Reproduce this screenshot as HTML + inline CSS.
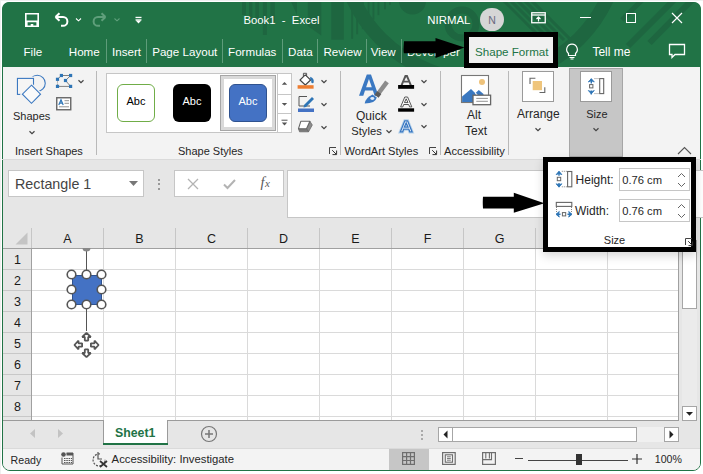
<!DOCTYPE html>
<html><head><meta charset="utf-8"><style>
html,body{margin:0;padding:0;width:703px;height:474px;overflow:hidden;background:#fff;font-family:"Liberation Sans", sans-serif;}
svg{overflow:visible}
</style></head><body>
<div style="position:absolute;left:0px;top:0px;width:703px;height:474px;background:#fff;"></div>
<div style="position:absolute;left:0px;top:0px;width:703px;height:1px;background:#efefef;"></div>
<div style="position:absolute;left:0px;top:0px;width:1px;height:474px;background:#efefef;"></div>
<div style="position:absolute;left:2px;top:2px;width:699px;height:469px;background:#f3f3f3;border-radius:8px;border:1px solid #217346;box-sizing:border-box;"></div>
<div style="position:absolute;left:2px;top:2px;width:699px;height:65px;background:#217346;border-radius:7px 7px 0 0;overflow:hidden;"></div>
<svg style="position:absolute;left:2px;top:2px;overflow:hidden;border-radius:7px 7px 0 0" width="699" height="65" viewBox="2 2 699 65"><rect x="242" y="0" width="4" height="15" fill="#1e6640"/><rect x="249" y="0" width="3.4000000000000057" height="19" fill="#1e6640"/><rect x="255.4" y="0" width="3.5999999999999943" height="24" fill="#1e6640"/><rect x="262.9" y="0" width="4.0" height="35" fill="#1e6640"/><rect x="270.4" y="0" width="4.400000000000034" height="22" fill="#1e6640"/><rect x="331.3" y="0" width="12.5" height="39.7" fill="#1e6640"/><path d="M290.3 0 H297 V15 Z" fill="#1e6640"/><path d="M307.8 0 H321.3 V35.4 L307.8 26 Z" fill="#1e6640"/><rect x="351.2" y="0" width="1.9" height="38.8" fill="#1e6640"/><rect x="356.2" y="0" width="1.9" height="34.3" fill="#1e6640"/><rect x="361.9" y="0" width="1.9" height="29.2" fill="#1e6640"/><rect x="367.6" y="0" width="1.9" height="24.1" fill="#1e6640"/><rect x="372.5" y="0" width="1.9" height="19.6" fill="#1e6640"/><rect x="377.5" y="0" width="1.9" height="15.1" fill="#1e6640"/><rect x="384" y="0" width="1.9" height="9.3" fill="#1e6640"/><rect x="389" y="0" width="1.9" height="4.8" fill="#1e6640"/><circle cx="412.5" cy="1" r="13.5" fill="#1e6640"/><circle cx="462" cy="24" r="14" fill="none" stroke="#1e6640" stroke-width="7"/><circle cx="480" cy="-60" r="140" fill="none" stroke="#1e6640" stroke-width="14"/><line x1="503" y1="0" x2="543" y2="40" stroke="#1e6640" stroke-width="3"/><line x1="510" y1="0" x2="550" y2="40" stroke="#1e6640" stroke-width="3"/><line x1="517" y1="0" x2="557" y2="40" stroke="#1e6640" stroke-width="3"/><line x1="524" y1="0" x2="564" y2="40" stroke="#1e6640" stroke-width="3"/><line x1="531" y1="0" x2="571" y2="40" stroke="#1e6640" stroke-width="3"/><line x1="628" y1="46" x2="674" y2="0" stroke="#1e6640" stroke-width="6"/><line x1="649.5" y1="43" x2="693" y2="-1" stroke="#1e6640" stroke-width="6"/><line x1="622" y1="20" x2="650" y2="-8" stroke="#1e6640" stroke-width="5"/></svg>
<svg style="position:absolute;left:25px;top:13px;" width="14" height="14" viewBox="0 0 14 14"><path fill="#fff" fill-rule="evenodd" d="M0 0 H14 V14 H0 Z M1.6 1.6 H12.4 V7.5 H1.6 Z M2.6 9.3 H11.4 V12.4 H8.3 V10.9 H5.7 V12.4 H2.6 Z"/></svg>
<svg style="position:absolute;left:53px;top:12px;" width="30" height="16" viewBox="0 0 30 16"><path d="M2.5 5 L6.5 1.2 M2.5 5 L6.5 8.8 M2.5 5 H10 A4.4 4.4 0 0 1 10 13.8 H8" fill="none" stroke="#fff" stroke-width="2"/><path d="M23 6.5 l2.5 2.3 l2.5 -2.3" fill="none" stroke="#fff" stroke-width="1.1"/></svg>
<svg style="position:absolute;left:92px;top:12px;" width="30" height="16" viewBox="0 0 30 16"><path d="M13.5 5 L9.5 1.2 M13.5 5 L9.5 8.8 M13.5 5 H6 A4.4 4.4 0 0 0 6 13.8 H8" fill="none" stroke="#5f9f7b" stroke-width="2"/><path d="M22.5 6.5 l2.5 2.3 l2.5 -2.3" fill="none" stroke="#5f9f7b" stroke-width="1.1"/></svg>
<svg style="position:absolute;left:135px;top:16px;" width="8" height="8" viewBox="0 0 8 8"><rect x="0.5" y="0.8" width="6" height="1.3" fill="#fff"/><rect x="0.5" y="3.3" width="6" height="1" fill="#fff"/><path d="M0.5 4.3 h6 l-3 3.2z" fill="#fff"/></svg>
<div style="position:absolute;left:243.5px;top:15.13px;font-size:11.3px;line-height:11.3px;color:#fff;font-weight:normal;white-space:nowrap;">Book1 &nbsp;- &nbsp;Excel</div>
<div style="position:absolute;left:427.3px;top:14.85px;font-size:11.4px;line-height:11.4px;color:#fff;font-weight:normal;white-space:nowrap;">NIRMAL</div>
<div style="position:absolute;left:480.2px;top:7.7px;width:23.8px;height:23.8px;background:#d6d6d6;border-radius:50%;"></div>
<div style="position:absolute;left:492.1px;top:15.11px;font-size:10.5px;line-height:10.5px;color:#6a6a80;font-weight:normal;white-space:nowrap;transform:translateX(-50%);">N</div>
<svg style="position:absolute;left:531px;top:12px;" width="15" height="12" viewBox="0 0 15 12"><rect x="0.75" y="0.75" width="13.5" height="10" fill="none" stroke="#fff" stroke-width="1.3"/><line x1="0.75" y1="3" x2="14" y2="3" stroke="#fff" stroke-width="1.3"/><path d="M7.5 9.5 V5 M5.5 7 L7.5 5 L9.5 7" fill="none" stroke="#fff" stroke-width="1.2"/></svg>
<div style="position:absolute;left:580px;top:17px;width:11px;height:1.2px;background:#fff;"></div>
<div style="position:absolute;left:626px;top:13px;width:10px;height:10px;border:1.2px solid #fff;box-sizing:border-box;"></div>
<svg style="position:absolute;left:671px;top:12px;" width="12" height="12" viewBox="0 0 12 12"><path d="M1 1 L11 11 M11 1 L1 11" stroke="#fff" stroke-width="1.2"/></svg>
<div style="position:absolute;left:23.5px;top:46.18px;font-size:11.6px;line-height:11.6px;color:#fff;font-weight:normal;white-space:nowrap;">File</div>
<div style="position:absolute;left:68.8px;top:46.18px;font-size:11.6px;line-height:11.6px;color:#fff;font-weight:normal;white-space:nowrap;">Home</div>
<div style="position:absolute;left:112px;top:46.18px;font-size:11.6px;line-height:11.6px;color:#fff;font-weight:normal;white-space:nowrap;">Insert</div>
<div style="position:absolute;left:152.2px;top:46.18px;font-size:11.6px;line-height:11.6px;color:#fff;font-weight:normal;white-space:nowrap;">Page Layout</div>
<div style="position:absolute;left:228.1px;top:46.18px;font-size:11.6px;line-height:11.6px;color:#fff;font-weight:normal;white-space:nowrap;">Formulas</div>
<div style="position:absolute;left:288.1px;top:46.18px;font-size:11.6px;line-height:11.6px;color:#fff;font-weight:normal;white-space:nowrap;">Data</div>
<div style="position:absolute;left:323.5px;top:46.18px;font-size:11.6px;line-height:11.6px;color:#fff;font-weight:normal;white-space:nowrap;">Review</div>
<div style="position:absolute;left:370.8px;top:46.18px;font-size:11.6px;line-height:11.6px;color:#fff;font-weight:normal;white-space:nowrap;">View</div>
<div style="position:absolute;left:407px;top:46.18px;font-size:11.6px;line-height:11.6px;color:#fff;font-weight:normal;white-space:nowrap;">Developer</div>
<div style="position:absolute;left:106px;top:39px;width:1px;height:24px;background:#5e9c7a;"></div>
<div style="position:absolute;left:146px;top:39px;width:1px;height:24px;background:#5e9c7a;"></div>
<div style="position:absolute;left:222px;top:39px;width:1px;height:24px;background:#5e9c7a;"></div>
<div style="position:absolute;left:282px;top:39px;width:1px;height:24px;background:#5e9c7a;"></div>
<div style="position:absolute;left:317px;top:39px;width:1px;height:24px;background:#5e9c7a;"></div>
<div style="position:absolute;left:366px;top:39px;width:1px;height:24px;background:#5e9c7a;"></div>
<div style="position:absolute;left:401px;top:39px;width:1px;height:24px;background:#5e9c7a;"></div>
<div style="position:absolute;left:469px;top:37px;width:85px;height:30px;background:#f0f0f0;"></div>
<div style="position:absolute;left:475px;top:46.18px;font-size:11.6px;line-height:11.6px;color:#217346;font-weight:normal;white-space:nowrap;">Shape Format</div>
<svg style="position:absolute;left:565px;top:43px;" width="14" height="17" viewBox="0 0 14 17"><path d="M7 1.2 A5.3 5.3 0 0 0 3.5 10.5 V12.5 H10.5 V10.5 A5.3 5.3 0 0 0 7 1.2 Z" fill="none" stroke="#fff" stroke-width="1.2"/><path d="M4.5 14.5 H9.5 M5.5 16 H8.5" stroke="#fff" stroke-width="1"/></svg>
<div style="position:absolute;left:592.4px;top:45.84px;font-size:12px;line-height:12px;color:#fff;font-weight:normal;white-space:nowrap;">Tell me</div>
<svg style="position:absolute;left:668px;top:43px;" width="18" height="16" viewBox="0 0 18 16"><path d="M1.5 1.5 H16.5 V11.5 H7 L4 14.5 V11.5 H1.5 Z" fill="none" stroke="#fff" stroke-width="1.3"/></svg>
<div style="position:absolute;left:2px;top:159px;width:699px;height:1px;background:#dadada;"></div>
<div style="position:absolute;left:96px;top:71px;width:1px;height:84px;background:#b9b9b9;"></div>
<div style="position:absolute;left:340px;top:71px;width:1px;height:84px;background:#b9b9b9;"></div>
<div style="position:absolute;left:440px;top:71px;width:1px;height:84px;background:#b9b9b9;"></div>
<div style="position:absolute;left:508px;top:71px;width:1px;height:84px;background:#b9b9b9;"></div>
<svg style="position:absolute;left:12px;top:70px;" width="40" height="40" viewBox="0 0 40 40"><circle cx="25.25" cy="13.2" r="8" fill="none" stroke="#3b78c0" stroke-width="1.1"/><rect x="5.45" y="8.4" width="16.05" height="16" fill="#f3f3f3" stroke="#f3f3f3" stroke-width="3.5"/><rect x="5.45" y="8.4" width="16.05" height="16" fill="#f5f5f5" stroke="#3b78c0" stroke-width="1.1"/><path d="M19.5 15.2 L28.5 24.2 L19.5 33.3 L10.4 24.2 Z" fill="#f3f3f3" stroke="#f3f3f3" stroke-width="3.5"/><path d="M19.5 15.2 L28.5 24.2 L19.5 33.3 L10.4 24.2 Z" fill="#fafafa" stroke="#3b78c0" stroke-width="1.1"/></svg>
<div style="position:absolute;left:13px;top:110.69px;font-size:11px;line-height:11px;color:#262626;font-weight:normal;white-space:nowrap;">Shapes</div>
<svg style="position:absolute;left:28px;top:129.5px;" width="8" height="5" viewBox="0 0 8 5"><path d="M1.5 1.2 L4 3.6 L6.5 1.2" fill="none" stroke="#444" stroke-width="1.2"/></svg>
<svg style="position:absolute;left:54px;top:72px;" width="20" height="18" viewBox="0 0 20 18"><path d="M7.4 3.5 H16.6 M7.4 3.5 L3.5 7.3 M16.6 3.5 L11.5 8.5 L16.6 14.4 H3.5" fill="none" stroke="#808080" stroke-width="1"/><path d="M3.5 7.3 V14.4" stroke="#808080" stroke-width="1" stroke-dasharray="1 1.2"/><rect x="5.800000000000001" y="1.9" width="3.2" height="3.2" fill="#2e75b6"/><rect x="15.000000000000002" y="1.9" width="3.2" height="3.2" fill="#2e75b6"/><rect x="1.9" y="5.699999999999999" width="3.2" height="3.2" fill="#2e75b6"/><rect x="9.9" y="6.9" width="3.2" height="3.2" fill="#2e75b6"/><rect x="1.9" y="12.8" width="3.2" height="3.2" fill="#2e75b6"/><rect x="15.000000000000002" y="12.8" width="3.2" height="3.2" fill="#2e75b6"/></svg>
<svg style="position:absolute;left:77px;top:79px;" width="8" height="5" viewBox="0 0 8 5"><path d="M1.5 1.2 L4 3.6 L6.5 1.2" fill="none" stroke="#444" stroke-width="1.2"/></svg>
<svg style="position:absolute;left:55.5px;top:96.5px;" width="16" height="14" viewBox="0 0 16 14"><rect x="0.75" y="0.75" width="14" height="12" fill="#fff" stroke="#666" stroke-width="1.4"/><path d="M2.8 8 L5 2.8 L7.2 8 M3.6 6.2 H6.4" fill="none" stroke="#2e75b6" stroke-width="1.2"/><path d="M8.5 3.7H13M8.5 6.3H13M3 9.8H13" stroke="#888" stroke-width="0.9"/></svg>
<div style="position:absolute;left:15px;top:145.69px;font-size:11px;line-height:11px;color:#262626;font-weight:normal;white-space:nowrap;">Insert Shapes</div>
<div style="position:absolute;left:106px;top:73px;width:185px;height:60px;background:#fff;border:1px solid #c6c6c6;box-sizing:border-box;"></div>
<div style="position:absolute;left:117px;top:84px;width:38px;height:38px;background:#fff;border:1.3px solid #70ad47;border-radius:6px;box-sizing:border-box;"></div>
<div style="position:absolute;left:136px;top:95.69px;font-size:11px;line-height:11px;color:#000;font-weight:normal;white-space:nowrap;transform:translateX(-50%);">Abc</div>
<div style="position:absolute;left:173px;top:84px;width:38px;height:38px;background:#000;border-radius:6px;"></div>
<div style="position:absolute;left:192px;top:95.69px;font-size:11px;line-height:11px;color:#fff;font-weight:normal;white-space:nowrap;transform:translateX(-50%);">Abc</div>
<div style="position:absolute;left:220px;top:74.5px;width:56px;height:56.5px;background:#fff;border:1px solid #a6a6a6;outline:3px solid #d9d9d9;outline-offset:-4px;box-sizing:border-box;"></div>
<div style="position:absolute;left:229px;top:84px;width:38px;height:38px;background:#4472c4;border:1.2px solid #2f528f;border-radius:6px;box-sizing:border-box;"></div>
<div style="position:absolute;left:248px;top:95.69px;font-size:11px;line-height:11px;color:#fff;font-weight:normal;white-space:nowrap;transform:translateX(-50%);">Abc</div>
<div style="position:absolute;left:277px;top:73px;width:14.5px;height:60px;background:#fff;border:1px solid #c6c6c6;box-sizing:border-box;"></div>
<div style="position:absolute;left:277px;top:94px;width:14.5px;height:1px;background:#c6c6c6;"></div>
<div style="position:absolute;left:277px;top:113px;width:14.5px;height:1px;background:#c6c6c6;"></div>
<svg style="position:absolute;left:281px;top:81px;" width="7" height="5" viewBox="0 0 7 5"><path d="M0.8 3.8 L3.5 1 L6.2 3.8 Z" fill="#555"/></svg>
<svg style="position:absolute;left:281px;top:102px;" width="7" height="5" viewBox="0 0 7 5"><path d="M0.8 1 L3.5 3.8 L6.2 1 Z" fill="#555"/></svg>
<svg style="position:absolute;left:281px;top:119px;" width="7" height="8" viewBox="0 0 7 8"><rect x="0.5" y="0.7" width="6" height="1" fill="#555"/><path d="M0.8 3.5 L3.5 6.5 L6.2 3.5 Z" fill="#555"/></svg>
<svg style="position:absolute;left:297px;top:72px;" width="18" height="18" viewBox="0 0 18 18"><path d="M6.4 5 V1.3 H9.6 V6" fill="none" stroke="#555" stroke-width="1"/><path d="M3 8 L8.3 2.8 L13.6 8 L8.3 13 Z" fill="#fff" stroke="#444" stroke-width="1.1" stroke-linejoin="round"/><path d="M13.2 4.8 Q17.6 6.5 16.6 10.8 Q15.2 11.8 14.2 10.2 Q14.8 8 13.2 7.2 Z" fill="#2e75b6"/><rect x="0.6" y="13.2" width="16" height="3.5" fill="#ed7d31"/></svg>
<svg style="position:absolute;left:297px;top:95px;" width="18" height="18" viewBox="0 0 18 18"><path d="M2 1.5 H10 M2 1.5 V11 H13" fill="none" stroke="#555" stroke-width="1"/><path d="M7 10 L15 2 L17 4 L9 12 L6.5 12.5 Z" fill="#2e75b6"/><rect x="1" y="13.5" width="16" height="3.5" fill="#4472c4"/></svg>
<svg style="position:absolute;left:296px;top:119px;" width="18" height="15" viewBox="0 0 18 15"><path d="M13.9 2.3 L16.3 6 L12.5 12.8 L10.5 9.7 Z" fill="#8c8c8c" stroke="#6a6a6a" stroke-width="0.8" stroke-linejoin="round"/><path d="M2.5 9.7 L10.5 9.7 L12.5 12.8 L3.5 12.8 Z" fill="#7a7a7a" stroke="#6a6a6a" stroke-width="0.8" stroke-linejoin="round"/><path d="M4.8 2.3 L13.9 2.3 L10.5 9.7 L2.5 9.7 Z" fill="#fff" stroke="#666" stroke-width="1.1" stroke-linejoin="round"/></svg>
<svg style="position:absolute;left:320px;top:79px;" width="8" height="5" viewBox="0 0 8 5"><path d="M1.5 1.2 L4 3.6 L6.5 1.2" fill="none" stroke="#444" stroke-width="1.2"/></svg>
<svg style="position:absolute;left:320px;top:101.5px;" width="8" height="5" viewBox="0 0 8 5"><path d="M1.5 1.2 L4 3.6 L6.5 1.2" fill="none" stroke="#444" stroke-width="1.2"/></svg>
<svg style="position:absolute;left:320px;top:124.5px;" width="8" height="5" viewBox="0 0 8 5"><path d="M1.5 1.2 L4 3.6 L6.5 1.2" fill="none" stroke="#444" stroke-width="1.2"/></svg>
<div style="position:absolute;left:178px;top:145.69px;font-size:11px;line-height:11px;color:#262626;font-weight:normal;white-space:nowrap;">Shape Styles</div>
<svg style="position:absolute;left:329px;top:147px;" width="9" height="9" viewBox="0 0 9 9"><path d="M0.5 7 V0.5 H7" fill="none" stroke="#444" stroke-width="1"/><path d="M3.2 3.2 L7 7 M7.6 3.5 V7.6 H3.5" fill="none" stroke="#333" stroke-width="1"/></svg>
<svg style="position:absolute;left:357px;top:72px;" width="32" height="34" viewBox="0 0 32 34"><path fill-rule="evenodd" fill="#3a78c2" d="M2 23.7 L9.8 2.5 H14 L21.5 23.7 H17.6 L15.9 18.6 H8 L6.3 23.7 Z M9.1 15.3 H14.8 L11.95 7 Z"/><path d="M21 22 L30 9.8" stroke="#8c8c8c" stroke-width="4.5"/><path d="M19.6 24.3 L22.3 20.6" stroke="#5a5a5a" stroke-width="5"/><path d="M7.7 31.4 Q9 25.5 15.5 22.6 L19.8 25.4 Q18.5 31.2 7.7 31.4 Z" fill="#3a78c2"/><ellipse cx="15.3" cy="26.5" rx="2" ry="1.4" fill="#fff" opacity="0.85"/></svg>
<div style="position:absolute;left:356px;top:109.84px;font-size:12px;line-height:12px;color:#262626;font-weight:normal;white-space:nowrap;">Quick</div>
<div style="position:absolute;left:351.3px;top:126.32px;font-size:11.2px;line-height:11.2px;color:#262626;font-weight:normal;white-space:nowrap;">Styles</div>
<svg style="position:absolute;left:384.5px;top:128.8px;" width="8" height="5" viewBox="0 0 8 5"><path d="M1.5 1.2 L4 3.6 L6.5 1.2" fill="none" stroke="#444" stroke-width="1.2"/></svg>
<svg style="position:absolute;left:397px;top:74px;" width="18" height="16" viewBox="0 0 18 16"><path fill-rule="evenodd" fill="#555" d="M3.6 11 L7.8 1 H10.6 L14.8 11 H12.6 L11.7 8.6 H6.7 L5.8 11 Z M7.4 6.7 H11 L9.2 2.9 Z"/><rect x="1.1" y="11" width="16" height="3.8" fill="#000"/></svg>
<svg style="position:absolute;left:397px;top:95px;" width="18" height="17" viewBox="0 0 18 17"><path fill-rule="evenodd" fill="#fff" stroke="#444" stroke-width="0.9" d="M3.6 11.9 L7.8 2 H10.6 L14.8 11.9 H12.6 L11.7 9.5 H6.7 L5.8 11.9 Z M7.4 7.6 H11 L9.2 3.8 Z"/><rect x="1.1" y="13.3" width="16" height="3.4" fill="#000"/></svg>
<svg style="position:absolute;left:397px;top:118px;" width="18" height="16" viewBox="0 0 18 16"><path fill-rule="evenodd" fill="none" stroke="#9dc3e6" stroke-width="3" opacity="0.7" d="M3.3 13.9 L7.8 2.8 H10.6 L15.1 13.9 H12.8 L11.8 11.2 H6.6 L5.6 13.9 Z M7.3 9.2 H11.1 L9.2 4.8 Z"/><path fill-rule="evenodd" fill="#fff" stroke="#3a78c2" stroke-width="1.3" d="M3.3 13.9 L7.8 2.8 H10.6 L15.1 13.9 H12.8 L11.8 11.2 H6.6 L5.6 13.9 Z M7.3 9.2 H11.1 L9.2 4.8 Z"/></svg>
<svg style="position:absolute;left:420px;top:78.7px;" width="8" height="5" viewBox="0 0 8 5"><path d="M1.5 1.2 L4 3.6 L6.5 1.2" fill="none" stroke="#444" stroke-width="1.2"/></svg>
<svg style="position:absolute;left:420px;top:101.7px;" width="8" height="5" viewBox="0 0 8 5"><path d="M1.5 1.2 L4 3.6 L6.5 1.2" fill="none" stroke="#444" stroke-width="1.2"/></svg>
<svg style="position:absolute;left:420px;top:124.4px;" width="8" height="5" viewBox="0 0 8 5"><path d="M1.5 1.2 L4 3.6 L6.5 1.2" fill="none" stroke="#444" stroke-width="1.2"/></svg>
<div style="position:absolute;left:344.5px;top:145.90px;font-size:11.1px;line-height:11.1px;color:#262626;font-weight:normal;white-space:nowrap;">WordArt Styles</div>
<svg style="position:absolute;left:429px;top:147px;" width="9" height="9" viewBox="0 0 9 9"><path d="M0.5 7 V0.5 H7" fill="none" stroke="#444" stroke-width="1"/><path d="M3.2 3.2 L7 7 M7.6 3.5 V7.6 H3.5" fill="none" stroke="#333" stroke-width="1"/></svg>
<svg style="position:absolute;left:460px;top:74px;" width="32" height="32" viewBox="0 0 32 32"><rect x="1.5" y="1.5" width="27" height="27" fill="#fff" stroke="#777" stroke-width="1.1"/><circle cx="22" cy="7.9" r="3" fill="#eec27a"/><path d="M2.1 22.5 L11 15 L15.3 19.2 L18.8 16.1 L23.5 20 V28 H2.1 Z" fill="#3a78c0"/><path d="M15.3 19.2 L17.2 21" stroke="#fff" stroke-width="1.2"/><rect x="13" y="21.2" width="17.6" height="9.5" fill="#fff" stroke="#666" stroke-width="1.3"/><path d="M16.3 24.4 H27.9 M16.3 27.3 H27.9" stroke="#888" stroke-width="0.9"/></svg>
<div style="position:absolute;left:467px;top:109.34px;font-size:12px;line-height:12px;color:#262626;font-weight:normal;white-space:nowrap;">Alt</div>
<div style="position:absolute;left:465px;top:125.34px;font-size:12px;line-height:12px;color:#262626;font-weight:normal;white-space:nowrap;">Text</div>
<div style="position:absolute;left:444px;top:145.52px;font-size:11.2px;line-height:11.2px;color:#262626;font-weight:normal;white-space:nowrap;">Accessibility</div>
<div style="position:absolute;left:522px;top:71px;width:32px;height:31px;background:#fff;border:1px solid #9a9a9a;box-sizing:border-box;"></div>
<svg style="position:absolute;left:529px;top:77px;" width="18" height="18" viewBox="0 0 18 18"><rect x="3.7" y="4" width="9.3" height="9.2" fill="#efc57c"/><path d="M1 7 V1.3 H6.4 M10.5 15.5 H15.8 V10.3" fill="none" stroke="#666" stroke-width="1.1"/></svg>
<div style="position:absolute;left:517px;top:108.14px;font-size:12px;line-height:12px;color:#262626;font-weight:normal;white-space:nowrap;">Arrange</div>
<svg style="position:absolute;left:534px;top:127px;" width="8" height="5" viewBox="0 0 8 5"><path d="M1.5 1.2 L4 3.6 L6.5 1.2" fill="none" stroke="#444" stroke-width="1.2"/></svg>
<div style="position:absolute;left:569px;top:68px;width:54px;height:88.5px;background:#c6c6c6;border:1px solid #a6a6a6;box-sizing:border-box;"></div>
<div style="position:absolute;left:580px;top:71px;width:32px;height:31px;background:#fff;border:1px solid #9a9a9a;box-sizing:border-box;"></div>
<svg style="position:absolute;left:587px;top:76px;" width="18" height="20" viewBox="0 0 18 20"><rect x="12.7" y="2.6" width="4" height="15" fill="#fff" stroke="#666" stroke-width="1.1"/><path d="M7.5 2.6 H12 M7.5 17.6 H12" stroke="#777" stroke-width="0.9" stroke-dasharray="1 1"/><path d="M4.3 3 V7.5 M4.3 14.5 V18.5" stroke="#2e75b6" stroke-width="1.4"/><path d="M1.3 6 L4.3 2.6 L7.3 6 L4.3 4.8 Z M1.3 14.5 L4.3 17.9 L7.3 14.5 L4.3 15.7 Z" fill="#2e75b6" stroke="#2e75b6" stroke-width="0.8" stroke-linejoin="round"/><rect x="2.6" y="8.6" width="3.3" height="3.3" fill="#fff" stroke="#666" stroke-width="1"/></svg>
<div style="position:absolute;left:586.3px;top:108.77px;font-size:10.9px;line-height:10.9px;color:#262626;font-weight:normal;white-space:nowrap;">Size</div>
<svg style="position:absolute;left:592px;top:127px;" width="8" height="5" viewBox="0 0 8 5"><path d="M1.5 1.2 L4 3.6 L6.5 1.2" fill="none" stroke="#444" stroke-width="1.2"/></svg>
<svg style="position:absolute;left:677px;top:146px;" width="15" height="9" viewBox="0 0 15 9"><path d="M1 8 L7.5 1.5 L14 8" fill="none" stroke="#555" stroke-width="1.1"/></svg>
<div style="position:absolute;left:3px;top:160px;width:697px;height:88px;background:#e6e6e6;"></div>
<div style="position:absolute;left:8px;top:170px;width:135.5px;height:26.5px;background:#fff;border:1px solid #c6c6c6;box-sizing:border-box;"></div>
<div style="position:absolute;left:15px;top:176.90px;font-size:14.3px;line-height:14.3px;color:#444;font-weight:normal;white-space:nowrap;">Rectangle 1</div>
<svg style="position:absolute;left:129px;top:181px;" width="9" height="5" viewBox="0 0 9 5"><path d="M0 0 H9 L4.5 5 Z" fill="#777"/></svg>
<div style="position:absolute;left:158px;top:178.5px;width:2px;height:2px;background:#999;"></div>
<div style="position:absolute;left:158px;top:183px;width:2px;height:2px;background:#999;"></div>
<div style="position:absolute;left:158px;top:187.5px;width:2px;height:2px;background:#999;"></div>
<div style="position:absolute;left:174px;top:170px;width:110px;height:26.5px;background:#fff;border:1px solid #c6c6c6;box-sizing:border-box;"></div>
<svg style="position:absolute;left:187px;top:178px;" width="12" height="12" viewBox="0 0 12 12"><path d="M1 1 L11 11 M11 1 L1 11" stroke="#b3b3b3" stroke-width="1.3"/></svg>
<svg style="position:absolute;left:223px;top:178px;" width="13" height="12" viewBox="0 0 13 12"><path d="M1 6.5 L4.5 10 L12 2" fill="none" stroke="#b3b3b3" stroke-width="2"/></svg>
<div style="position:absolute;left:260.5px;top:175.23px;font-size:14.5px;line-height:14.5px;color:#5a5a5a;font-weight:normal;white-space:nowrap;font-family:'Liberation Serif';"><i>f</i><i style='font-size:11px;margin-left:0.5px'>x</i></div>
<div style="position:absolute;left:286.8px;top:170px;width:430px;height:47.5px;background:#fff;border:1px solid #c6c6c6;box-sizing:border-box;"></div>
<div style="position:absolute;left:3px;top:228px;width:676px;height:20px;background:#e6e6e6;"></div>
<div style="position:absolute;left:3px;top:248px;width:676px;height:172px;background:#fff;"></div>
<svg style="position:absolute;left:15px;top:232px;" width="13" height="13" viewBox="0 0 13 13"><path d="M12.5 0.5 V12.5 H0.5 Z" fill="#c4c4c4"/></svg>
<div style="position:absolute;left:103px;top:228px;width:1px;height:20px;background:#c6c6c6;"></div>
<div style="position:absolute;left:67.5px;top:232.92px;font-size:12.5px;line-height:12.5px;color:#1a1a1a;font-weight:normal;white-space:nowrap;transform:translateX(-50%);">A</div>
<div style="position:absolute;left:175px;top:228px;width:1px;height:20px;background:#c6c6c6;"></div>
<div style="position:absolute;left:139.5px;top:232.92px;font-size:12.5px;line-height:12.5px;color:#1a1a1a;font-weight:normal;white-space:nowrap;transform:translateX(-50%);">B</div>
<div style="position:absolute;left:247px;top:228px;width:1px;height:20px;background:#c6c6c6;"></div>
<div style="position:absolute;left:211.5px;top:232.92px;font-size:12.5px;line-height:12.5px;color:#1a1a1a;font-weight:normal;white-space:nowrap;transform:translateX(-50%);">C</div>
<div style="position:absolute;left:319px;top:228px;width:1px;height:20px;background:#c6c6c6;"></div>
<div style="position:absolute;left:283.5px;top:232.92px;font-size:12.5px;line-height:12.5px;color:#1a1a1a;font-weight:normal;white-space:nowrap;transform:translateX(-50%);">D</div>
<div style="position:absolute;left:391px;top:228px;width:1px;height:20px;background:#c6c6c6;"></div>
<div style="position:absolute;left:355.5px;top:232.92px;font-size:12.5px;line-height:12.5px;color:#1a1a1a;font-weight:normal;white-space:nowrap;transform:translateX(-50%);">E</div>
<div style="position:absolute;left:463px;top:228px;width:1px;height:20px;background:#c6c6c6;"></div>
<div style="position:absolute;left:427.5px;top:232.92px;font-size:12.5px;line-height:12.5px;color:#1a1a1a;font-weight:normal;white-space:nowrap;transform:translateX(-50%);">F</div>
<div style="position:absolute;left:535px;top:228px;width:1px;height:20px;background:#c6c6c6;"></div>
<div style="position:absolute;left:499.5px;top:232.92px;font-size:12.5px;line-height:12.5px;color:#1a1a1a;font-weight:normal;white-space:nowrap;transform:translateX(-50%);">G</div>
<div style="position:absolute;left:607px;top:228px;width:1px;height:20px;background:#c6c6c6;"></div>
<div style="position:absolute;left:571.5px;top:232.92px;font-size:12.5px;line-height:12.5px;color:#1a1a1a;font-weight:normal;white-space:nowrap;transform:translateX(-50%);">H</div>
<div style="position:absolute;left:31px;top:228px;width:1px;height:20px;background:#c6c6c6;"></div>
<div style="position:absolute;left:3px;top:248px;width:676px;height:1px;background:#a0a0a0;"></div>
<div style="position:absolute;left:3px;top:249px;width:28px;height:171px;background:#e6e6e6;"></div>
<div style="position:absolute;left:31px;top:249px;width:1px;height:171px;background:#a0a0a0;"></div>
<div style="position:absolute;left:3px;top:269px;width:28px;height:1px;background:#c8c8c8;"></div>
<div style="position:absolute;left:32px;top:269px;width:647px;height:1px;background:#dadada;"></div>
<div style="position:absolute;left:17.5px;top:253.92px;font-size:12.5px;line-height:12.5px;color:#1a1a1a;font-weight:normal;white-space:nowrap;transform:translateX(-50%);">1</div>
<div style="position:absolute;left:3px;top:290px;width:28px;height:1px;background:#c8c8c8;"></div>
<div style="position:absolute;left:32px;top:290px;width:647px;height:1px;background:#dadada;"></div>
<div style="position:absolute;left:17.5px;top:274.92px;font-size:12.5px;line-height:12.5px;color:#1a1a1a;font-weight:normal;white-space:nowrap;transform:translateX(-50%);">2</div>
<div style="position:absolute;left:3px;top:311px;width:28px;height:1px;background:#c8c8c8;"></div>
<div style="position:absolute;left:32px;top:311px;width:647px;height:1px;background:#dadada;"></div>
<div style="position:absolute;left:17.5px;top:295.92px;font-size:12.5px;line-height:12.5px;color:#1a1a1a;font-weight:normal;white-space:nowrap;transform:translateX(-50%);">3</div>
<div style="position:absolute;left:3px;top:332px;width:28px;height:1px;background:#c8c8c8;"></div>
<div style="position:absolute;left:32px;top:332px;width:647px;height:1px;background:#dadada;"></div>
<div style="position:absolute;left:17.5px;top:316.92px;font-size:12.5px;line-height:12.5px;color:#1a1a1a;font-weight:normal;white-space:nowrap;transform:translateX(-50%);">4</div>
<div style="position:absolute;left:3px;top:353px;width:28px;height:1px;background:#c8c8c8;"></div>
<div style="position:absolute;left:32px;top:353px;width:647px;height:1px;background:#dadada;"></div>
<div style="position:absolute;left:17.5px;top:337.92px;font-size:12.5px;line-height:12.5px;color:#1a1a1a;font-weight:normal;white-space:nowrap;transform:translateX(-50%);">5</div>
<div style="position:absolute;left:3px;top:374px;width:28px;height:1px;background:#c8c8c8;"></div>
<div style="position:absolute;left:32px;top:374px;width:647px;height:1px;background:#dadada;"></div>
<div style="position:absolute;left:17.5px;top:358.92px;font-size:12.5px;line-height:12.5px;color:#1a1a1a;font-weight:normal;white-space:nowrap;transform:translateX(-50%);">6</div>
<div style="position:absolute;left:3px;top:395px;width:28px;height:1px;background:#c8c8c8;"></div>
<div style="position:absolute;left:32px;top:395px;width:647px;height:1px;background:#dadada;"></div>
<div style="position:absolute;left:17.5px;top:379.92px;font-size:12.5px;line-height:12.5px;color:#1a1a1a;font-weight:normal;white-space:nowrap;transform:translateX(-50%);">7</div>
<div style="position:absolute;left:3px;top:416px;width:28px;height:1px;background:#c8c8c8;"></div>
<div style="position:absolute;left:32px;top:416px;width:647px;height:1px;background:#dadada;"></div>
<div style="position:absolute;left:17.5px;top:400.92px;font-size:12.5px;line-height:12.5px;color:#1a1a1a;font-weight:normal;white-space:nowrap;transform:translateX(-50%);">8</div>
<div style="position:absolute;left:103px;top:249px;width:1px;height:171px;background:#dadada;"></div>
<div style="position:absolute;left:175px;top:249px;width:1px;height:171px;background:#dadada;"></div>
<div style="position:absolute;left:247px;top:249px;width:1px;height:171px;background:#dadada;"></div>
<div style="position:absolute;left:319px;top:249px;width:1px;height:171px;background:#dadada;"></div>
<div style="position:absolute;left:391px;top:249px;width:1px;height:171px;background:#dadada;"></div>
<div style="position:absolute;left:463px;top:249px;width:1px;height:171px;background:#dadada;"></div>
<div style="position:absolute;left:535px;top:249px;width:1px;height:171px;background:#dadada;"></div>
<div style="position:absolute;left:607px;top:249px;width:1px;height:171px;background:#dadada;"></div>
<div style="position:absolute;left:678px;top:228px;width:1px;height:193px;background:#a0a0a0;"></div>
<div style="position:absolute;left:679px;top:228px;width:21px;height:193px;background:#e6e6e6;"></div>
<div style="position:absolute;left:682px;top:228px;width:15px;height:193px;background:#ebebeb;"></div>
<div style="position:absolute;left:682px;top:240px;width:15px;height:69px;background:#fff;border:1px solid #a6a6a6;box-sizing:border-box;"></div>
<div style="position:absolute;left:682px;top:406px;width:15px;height:15px;background:#fff;border:1px solid #a6a6a6;box-sizing:border-box;"></div>
<svg style="position:absolute;left:686px;top:412px;" width="7" height="4" viewBox="0 0 7 4"><path d="M0 0 H7 L3.5 3.8 Z" fill="#222"/></svg>
<div style="position:absolute;left:86px;top:249px;width:1px;height:26px;background:#555;"></div>
<svg style="position:absolute;left:82px;top:248px;" width="9" height="5" viewBox="0 0 9 5"><path d="M0.5 0 A4 3.5 0 0 0 8.5 0 Z" fill="#888"/></svg>
<div style="position:absolute;left:86px;top:305px;width:1px;height:26px;background:#555;"></div>
<div style="position:absolute;left:71.5px;top:274.5px;width:30px;height:30px;background:#4472c4;border:1.2px solid #2f528f;box-sizing:border-box;"></div>
<svg style="position:absolute;left:62px;top:265px;" width="50" height="50" viewBox="0 0 50 50"><circle cx="9.5" cy="9.5" r="4.3" fill="#fff" stroke="#555" stroke-width="1.6"/><circle cx="9.5" cy="24.5" r="4.3" fill="#fff" stroke="#555" stroke-width="1.6"/><circle cx="9.5" cy="39.5" r="4.3" fill="#fff" stroke="#555" stroke-width="1.6"/><circle cx="24.5" cy="9.5" r="4.3" fill="#fff" stroke="#555" stroke-width="1.6"/><circle cx="24.5" cy="39.5" r="4.3" fill="#fff" stroke="#555" stroke-width="1.6"/><circle cx="39.5" cy="9.5" r="4.3" fill="#fff" stroke="#555" stroke-width="1.6"/><circle cx="39.5" cy="24.5" r="4.3" fill="#fff" stroke="#555" stroke-width="1.6"/><circle cx="39.5" cy="39.5" r="4.3" fill="#fff" stroke="#555" stroke-width="1.6"/></svg>
<svg style="position:absolute;left:72px;top:330px;" width="30" height="30" viewBox="0 0 30 30"><path d="M14.5 2.9 L18.8 7.0 H16.2 V10.6 H12.8 V7.0 H10.2 Z M14.5 27.1 L18.8 23.0 H16.2 V19.4 H12.8 V23.0 H10.2 Z M2.4 15 L6.5 10.7 V13.3 H10.1 V16.7 H6.5 V19.3 Z M26.6 15 L22.5 10.7 V13.3 H18.9 V16.7 H22.5 V19.3 Z" fill="#fff" stroke="#555" stroke-width="1.8" stroke-linejoin="bevel"/></svg>
<div style="position:absolute;left:3px;top:420px;width:676px;height:1px;background:#9b9b9b;"></div>
<div style="position:absolute;left:3px;top:421px;width:697px;height:27px;background:#e6e6e6;"></div>
<svg style="position:absolute;left:28px;top:428px;" width="8" height="11" viewBox="0 0 8 11"><path d="M7 1 L2 5.5 L7 10 Z" fill="#c3c3c3"/></svg>
<svg style="position:absolute;left:57px;top:428px;" width="8" height="11" viewBox="0 0 8 11"><path d="M1 1 L6 5.5 L1 10 Z" fill="#c3c3c3"/></svg>
<div style="position:absolute;left:103px;top:420px;width:65px;height:25px;background:#fff;border-left:1px solid #9b9b9b;border-right:1px solid #9b9b9b;box-sizing:border-box;"></div>
<div style="position:absolute;left:103px;top:443px;width:65px;height:2px;background:#217346;"></div>
<div style="position:absolute;left:115px;top:427.09px;font-size:12.3px;line-height:12.3px;color:#217346;font-weight:bold;white-space:nowrap;">Sheet1</div>
<svg style="position:absolute;left:200px;top:425px;" width="18" height="18" viewBox="0 0 18 18"><circle cx="9" cy="9" r="7.5" fill="none" stroke="#777" stroke-width="1.2"/><path d="M9 5 V13 M5 9 H13" stroke="#777" stroke-width="1.5"/></svg>
<div style="position:absolute;left:421px;top:429.5px;width:2px;height:2px;background:#aaa;"></div>
<div style="position:absolute;left:421px;top:433.5px;width:2px;height:2px;background:#aaa;"></div>
<div style="position:absolute;left:421px;top:437.5px;width:2px;height:2px;background:#aaa;"></div>
<div style="position:absolute;left:438px;top:427px;width:241px;height:15px;background:#f0f0f0;"></div>
<div style="position:absolute;left:438px;top:427px;width:15px;height:15px;background:#fff;border:1px solid #a6a6a6;box-sizing:border-box;"></div>
<svg style="position:absolute;left:442px;top:430px;" width="7" height="9" viewBox="0 0 7 9"><path d="M5.5 0.5 V8.5 L1.5 4.5 Z" fill="#222"/></svg>
<div style="position:absolute;left:452px;top:427px;width:185px;height:15px;background:#fff;border:1px solid #a6a6a6;box-sizing:border-box;"></div>
<div style="position:absolute;left:664px;top:427px;width:15px;height:15px;background:#fff;border:1px solid #a6a6a6;box-sizing:border-box;"></div>
<svg style="position:absolute;left:668px;top:430px;" width="7" height="9" viewBox="0 0 7 9"><path d="M1.5 0.5 V8.5 L5.5 4.5 Z" fill="#222"/></svg>
<div style="position:absolute;left:3px;top:448px;width:697px;height:22px;background:#f3f3f3;border-radius:0 0 7px 7px;"></div>
<div style="position:absolute;left:3px;top:448px;width:697px;height:1px;background:#dadada;"></div>
<div style="position:absolute;left:10.6px;top:454.63px;font-size:10.6px;line-height:10.6px;color:#262626;font-weight:normal;white-space:nowrap;">Ready</div>
<svg style="position:absolute;left:61px;top:452px;" width="13" height="13" viewBox="0 0 13 13"><circle cx="2.5" cy="2.5" r="2.3" fill="#555"/><path d="M5.5 1 H12 V12 H1 V5.5" fill="none" stroke="#555" stroke-width="1"/><rect x="5.5" y="1" width="6.5" height="2.5" fill="#555"/><path d="M3 6.5 h8 M3 8.5 h8 M3 10.5 h8" stroke="#555" stroke-width="1" stroke-dasharray="1.5 0.8"/></svg>
<svg style="position:absolute;left:91px;top:451px;" width="18" height="17" viewBox="0 0 18 17"><path d="M9 3 A6 6 0 1 0 14 8" fill="none" stroke="#555" stroke-width="1.2" stroke-dasharray="2 1.3"/><path d="M7 1 V8 H11" fill="none" stroke="#555" stroke-width="1.2"/><path d="M9 10 L16 16 M16 10 L9 16" stroke="#333" stroke-width="1.7"/></svg>
<div style="position:absolute;left:111.6px;top:453.93px;font-size:11.3px;line-height:11.3px;color:#262626;font-weight:normal;white-space:nowrap;">Accessibility: Investigate</div>
<div style="position:absolute;left:389px;top:449px;width:40px;height:21px;background:#c6c6c6;"></div>
<svg style="position:absolute;left:402px;top:452px;" width="13" height="13" viewBox="0 0 13 13"><rect x="0.6" y="0.6" width="11.8" height="11.8" fill="none" stroke="#6e6e6e" stroke-width="1.2"/><path d="M4.6 0.6 V12.4 M8.5 0.6 V12.4 M0.6 4.6 H12.4 M0.6 8.5 H12.4" stroke="#6e6e6e" stroke-width="1.2"/></svg>
<svg style="position:absolute;left:442px;top:452px;" width="14" height="13" viewBox="0 0 14 13"><rect x="0.6" y="0.6" width="12.6" height="11.8" fill="none" stroke="#6e6e6e" stroke-width="1.2"/><rect x="3.3" y="2.8" width="7.2" height="7.4" fill="none" stroke="#6e6e6e" stroke-width="1.1"/><path d="M5 4.8 H8.8 M5 6.5 H8.8 M5 8.2 H8.8" stroke="#6e6e6e" stroke-width="0.9"/></svg>
<svg style="position:absolute;left:482px;top:452px;" width="14" height="13" viewBox="0 0 14 13"><rect x="0.6" y="0.6" width="12.8" height="11.8" fill="none" stroke="#6e6e6e" stroke-width="1.2"/><path d="M3.8 0.6 V6.5 M7.4 0.6 V6.5 M0.6 7.6 H9.5 V0.6" fill="none" stroke="#6e6e6e" stroke-width="1.1"/></svg>
<div style="position:absolute;left:515px;top:458px;width:7.5px;height:1px;background:#444;"></div>
<div style="position:absolute;left:528px;top:459.5px;width:100px;height:1px;background:#444;"></div>
<div style="position:absolute;left:576px;top:453.5px;width:5.5px;height:11.5px;background:#333;"></div>
<svg style="position:absolute;left:632px;top:454px;" width="10" height="10" viewBox="0 0 10 10"><path d="M5 0 V10 M0 5 H10" stroke="#333" stroke-width="1.2"/></svg>
<div style="position:absolute;left:654.8px;top:454.03px;font-size:10.6px;line-height:10.6px;color:#262626;font-weight:normal;white-space:nowrap;">100%</div>
<div style="position:absolute;left:542.8px;top:157px;width:153.5px;height:94.8px;background:#fff;border:5px solid #000;box-sizing:border-box;box-shadow:0 4px 9px rgba(0,0,0,0.16);"></div>
<svg style="position:absolute;left:555px;top:170px;" width="18" height="18" viewBox="0 0 18 18"><rect x="12.6" y="1.5" width="4.2" height="15.3" fill="#fff" stroke="#666" stroke-width="1.1"/><path d="M6.8 1.3 H12 M6.8 16.8 H12" stroke="#777" stroke-width="0.9" stroke-dasharray="1 1"/><path d="M4 1.8 V5.8 M4 13 V16.8" stroke="#2e75b6" stroke-width="1.4"/><path d="M1.2 4.6 L4 1.2 L6.8 4.6 L4 3.6 Z M1.2 13.8 L4 17.2 L6.8 13.8 L4 14.8 Z" fill="#2e75b6" stroke="#2e75b6" stroke-width="0.9" stroke-linejoin="round"/><rect x="2.3" y="7.3" width="3.4" height="3.4" fill="#fff" stroke="#666" stroke-width="1"/></svg>
<div style="position:absolute;left:575.6px;top:174.04px;font-size:12px;line-height:12px;color:#262626;font-weight:normal;white-space:nowrap;">Height:</div>
<div style="position:absolute;left:619px;top:168px;width:70.5px;height:23px;background:#fff;border:1px solid #c6c6c6;box-sizing:border-box;"></div>
<div style="position:absolute;left:622.2px;top:174.72px;font-size:11.2px;line-height:11.2px;color:#262626;font-weight:normal;white-space:nowrap;">0.76 cm</div>
<svg style="position:absolute;left:677px;top:172px;" width="9" height="16" viewBox="0 0 9 16"><path d="M1 5 L4.5 1.5 L8 5 M1 11 L4.5 14.5 L8 11" fill="none" stroke="#666" stroke-width="1"/></svg>
<svg style="position:absolute;left:555px;top:201px;" width="18" height="18" viewBox="0 0 18 18"><rect x="1.3" y="1.4" width="15.5" height="4" fill="#fff" stroke="#666" stroke-width="1.1"/><path d="M1.5 6 V11.5 M16.5 6 V11.5" stroke="#777" stroke-width="0.9" stroke-dasharray="1 1"/><path d="M1.5 13.3 H5.5 M12.5 13.3 H16.5" stroke="#2e75b6" stroke-width="1.4"/><path d="M4.3 10.5 L1 13.3 L4.3 16.1 L3.3 13.3 Z M13.7 10.5 L17 13.3 L13.7 16.1 L14.7 13.3 Z" fill="#2e75b6" stroke="#2e75b6" stroke-width="0.9" stroke-linejoin="round"/><rect x="7.4" y="11.6" width="3.3" height="3.3" fill="#fff" stroke="#666" stroke-width="1"/></svg>
<div style="position:absolute;left:575px;top:204.84px;font-size:12px;line-height:12px;color:#262626;font-weight:normal;white-space:nowrap;">Width:</div>
<div style="position:absolute;left:619px;top:199px;width:70.5px;height:23px;background:#fff;border:1px solid #c6c6c6;box-sizing:border-box;"></div>
<div style="position:absolute;left:622.2px;top:205.52px;font-size:11.2px;line-height:11.2px;color:#262626;font-weight:normal;white-space:nowrap;">0.76 cm</div>
<svg style="position:absolute;left:677px;top:203px;" width="9" height="16" viewBox="0 0 9 16"><path d="M1 5 L4.5 1.5 L8 5 M1 11 L4.5 14.5 L8 11" fill="none" stroke="#666" stroke-width="1"/></svg>
<div style="position:absolute;left:603.8px;top:235.09px;font-size:11px;line-height:11px;color:#262626;font-weight:normal;white-space:nowrap;">Size</div>
<svg style="position:absolute;left:685px;top:238px;" width="9" height="9" viewBox="0 0 9 9"><path d="M0.5 7 V0.5 H7" fill="none" stroke="#444" stroke-width="1"/><path d="M3.2 3.2 L7 7 M7.6 3.5 V7.6 H3.5" fill="none" stroke="#333" stroke-width="1"/></svg>
<div style="position:absolute;left:464px;top:32px;width:94px;height:35.5px;border:5px solid #000;box-sizing:border-box;"></div>
<svg style="position:absolute;left:400px;top:35px;" width="70" height="26" viewBox="0 0 70 26"><path d="M4 6.5 Q3.5 6.2 4.2 6.3 L35.5 6.3 L35.5 3 L64.5 12.6 L35.5 23 L35.5 18.3 L4 18.3 Q3.5 18 3.6 12 Z" fill="#000"/></svg>
<svg style="position:absolute;left:480px;top:190px;" width="68" height="25" viewBox="0 0 68 25"><path d="M3 6.8 L33.8 6.8 L33.8 2.7 L64.4 13.2 L33.8 22.7 L33.8 18.5 L3 18.5 Q2.5 12 3 6.8 Z" fill="#000"/></svg>
</body></html>
